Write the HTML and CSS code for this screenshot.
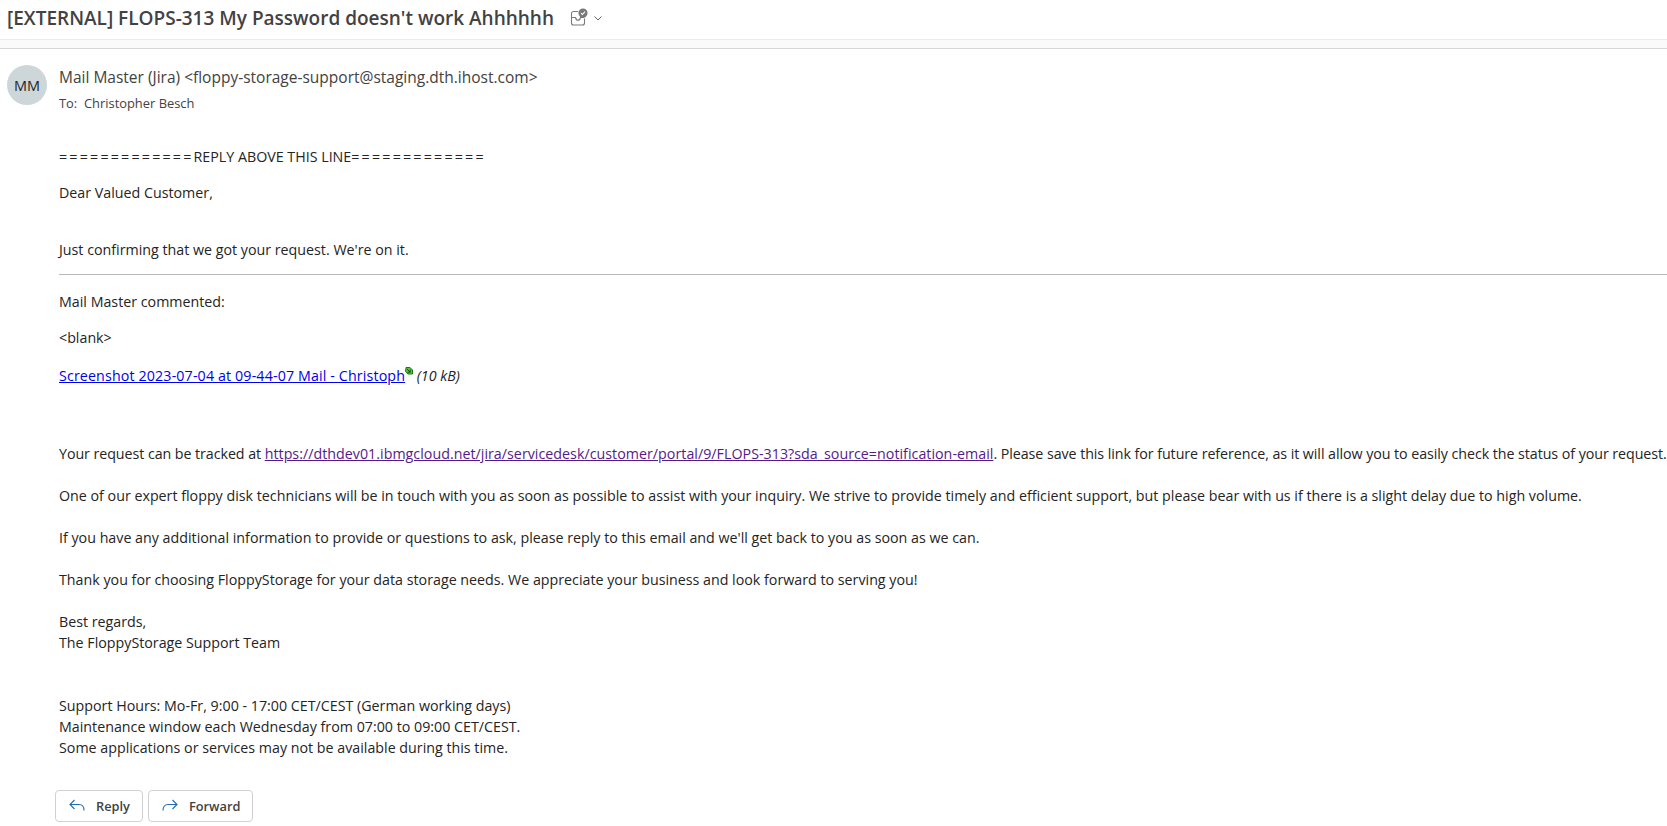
FILE: index.html
```html
<!DOCTYPE html>
<html lang="en">
<head>
    <meta charset="UTF-8">
    <title>[EXTERNAL] FLOPS-313 My Password doesn't work Ahhhhhh</title>
    <link rel="stylesheet" href="styles.css">
</head>
<body>
    <header class="subject-bar">
        <h1 class="subject">[EXTERNAL] FLOPS-313 My Password doesn't work Ahhhhhh</h1>
        <svg class="tag-icon" width="20" height="20" viewBox="0 0 20 20" fill="none" stroke="#7a7a7a" stroke-width="1.1">
            <path d="M9 3.5H4.5A2 2 0 0 0 2.5 5.5V15a2 2 0 0 0 2 2h9a2 2 0 0 0 2-2V10.5"/>
            <path d="M2.5 9.5H6.5C7 11.5 8 12.3 9 12.3S11 11.5 11.5 9.5H15.5"/>
            <circle cx="14" cy="5" r="4.6" fill="#7a7a7a" stroke="none"/>
            <path d="M12 5.1l1.4 1.4 2.6-2.8" stroke="#fff"/>
        </svg>
        <svg class="chevron" width="10" height="10" viewBox="0 0 10 10" fill="none" stroke="#666" stroke-width="1">
            <path d="M1.5 3.5L5 7l3.5-3.5"/>
        </svg>
    </header>
    <div class="band"></div>

    <main class="message">
        <div class="sender">
            <div class="avatar">MM</div>
            <div class="sender-info">
                <div class="from">Mail Master (Jira) &lt;floppy-storage-support@staging.dth.ihost.com&gt;</div>
                <div class="to">To:&nbsp; Christopher Besch</div>
            </div>
        </div>

        <div class="body">
            <p class="reply-line"><span class="equals">=============</span>REPLY ABOVE THIS LINE<span class="equals">=============</span></p>
            <p class="dear">Dear Valued Customer,</p>
            <p class="confirm">Just confirming that we got your request. We're on it.</p>
            <hr class="rule">
            <p class="commented">Mail Master commented:</p>
            <p class="blank">&lt;blank&gt;</p>
            <p class="attachment">
                <a href="#" class="link attach-link">Screenshot 2023-07-04 at 09-44-07 Mail - Christoph</a><svg class="attach-icon" width="8" height="8" viewBox="0 0 8 8">
                    <path d="M1 .5h4l2.5 2.5v4H3L.5 4.5z" fill="#5cc23a" stroke="#1c7a12" stroke-width="1"/>
                    <path d="M2 2l3 3M5.2 2.6V5.2H2.6" stroke="#0c5a0c" stroke-width="1" fill="none"/>
                </svg>
                <em>(10 kB)</em>
            </p>
            <p class="tracked">Your request can be tracked at <a href="#" class="link visited">https://dthdev01.ibmgcloud.net/jira/servicedesk/customer/portal/9/FLOPS-313?sda_source=notification-email</a>. Please save this link for future reference, as it will allow you to easily check the status of your request.</p>
            <p>One of our expert floppy disk technicians will be in touch with you as soon as possible to assist with your inquiry. We strive to provide timely and efficient support, but please bear with us if there is a slight delay due to high volume.</p>
            <p>If you have any additional information to provide or questions to ask, please reply to this email and we'll get back to you as soon as we can.</p>
            <p>Thank you for choosing FloppyStorage for your data storage needs. We appreciate your business and look forward to serving you!</p>
            <p>Best regards,<br>The FloppyStorage Support Team</p>
            <p class="hours">Support Hours: Mo-Fr, 9:00 - 17:00 CET/CEST (German working days)<br>Maintenance window each Wednesday from 07:00 to 09:00 CET/CEST.<br>Some applications or services may not be available during this time.</p>
        </div>

        <div class="actions">
            <button class="action">
                <svg width="20" height="20" viewBox="0 0 20 20" fill="none" stroke="#1f6cb5" stroke-width="1.1">
                    <path d="M7.5 4L3 8.5 7.5 13"/>
                    <path d="M3 8.5H12C15 8.5 17 10.5 17 14.5"/>
                </svg>
                Reply
            </button>
            <button class="action">
                <svg width="20" height="20" viewBox="0 0 20 20" fill="none" stroke="#1f6cb5" stroke-width="1.1">
                    <path d="M12.5 4L17 8.5 12.5 13"/>
                    <path d="M17 8.5H8C5 8.5 3 10.5 3 14.5"/>
                </svg>
                Forward
            </button>
        </div>
    </main>
</body>
</html>
```
FILE: styles.css
```css
/* page */
body {
    margin: 0;
    height: 826px;
    overflow: hidden;
    background-color: #fff;
    color: #242424;
    font-family: "Open Sans", "Noto Sans", sans-serif;
}

/* subject row */
.subject-bar {
    display: flex;
    align-items: center;
    height: 35px;
    padding: 0 0 4px 7px;
    border-bottom: 1px solid #ebebeb;
}

.subject {
    margin: 0;
    font-size: 19px;
    font-weight: 600;
    color: #424242;
    white-space: nowrap;
}

.tag-icon {
    margin-left: 15px;
}

.chevron {
    margin-left: 4px;
}

.band {
    height: 8px;
    background-color: #fafafa;
    border-bottom: 1px solid #d6d6d6;
}

/* sender block */
.message {
    display: flex;
    flex-direction: column;
}

.sender {
    display: flex;
    padding: 16px 0 0 7px;
}

.avatar {
    display: flex;
    align-items: center;
    justify-content: center;
    width: 40px;
    height: 40px;
    border-radius: 50%;
    background-color: #cdd6d9;
    color: #242424;
    font-size: 14.5px;
    font-weight: 500;
}

.sender-info {
    margin-left: 12px;
}

.from {
    font-size: 15.5px;
    line-height: 20px;
    margin-top: 2px;
    color: #424242;
}

.to {
    font-size: 12.9px;
    line-height: 16px;
    margin-top: 8px;
    color: #424242;
}

/* mail body */
.body {
    padding: 35px 0 0 59px;
    font-size: 14.25px;
    line-height: 21px;
    white-space: nowrap;
}

.body p {
    margin: 0 0 21px;
}

.body .reply-line {
    margin-bottom: 15px;
}

.equals {
    letter-spacing: 2.2px;
}

.body .dear {
    margin-bottom: 36px;
}

.body .confirm {
    margin-bottom: 14px;
}

.rule {
    margin: 0 0 16px;
    border: none;
    border-top: 1px solid #b8b8b8;
}

.body .commented {
    margin-bottom: 15px;
}

.body .blank {
    margin-bottom: 17px;
}

.body .attachment {
    margin-bottom: 57px;
}

.body .tracked {
    letter-spacing: -0.06px;
}

.body .hours {
    margin: 42px 0 0;
}

.link {
    color: #0000ee;
}

.attach-link {
    letter-spacing: 0.13px;
}

.visited {
    color: #551a8b;
    letter-spacing: 0.02px;
}

.attach-icon {
    vertical-align: 6px;
}

/* reply buttons */
.actions {
    display: flex;
    gap: 5px;
    padding: 32px 0 0 55px;
}

.action {
    display: flex;
    align-items: center;
    gap: 9px;
    height: 32px;
    padding: 0 12px 0 11px;
    background-color: #fff;
    border: 1px solid #d1d1d1;
    border-radius: 4px;
    font-family: inherit;
    font-size: 12.8px;
    font-weight: 600;
    color: #424242;
}
```
